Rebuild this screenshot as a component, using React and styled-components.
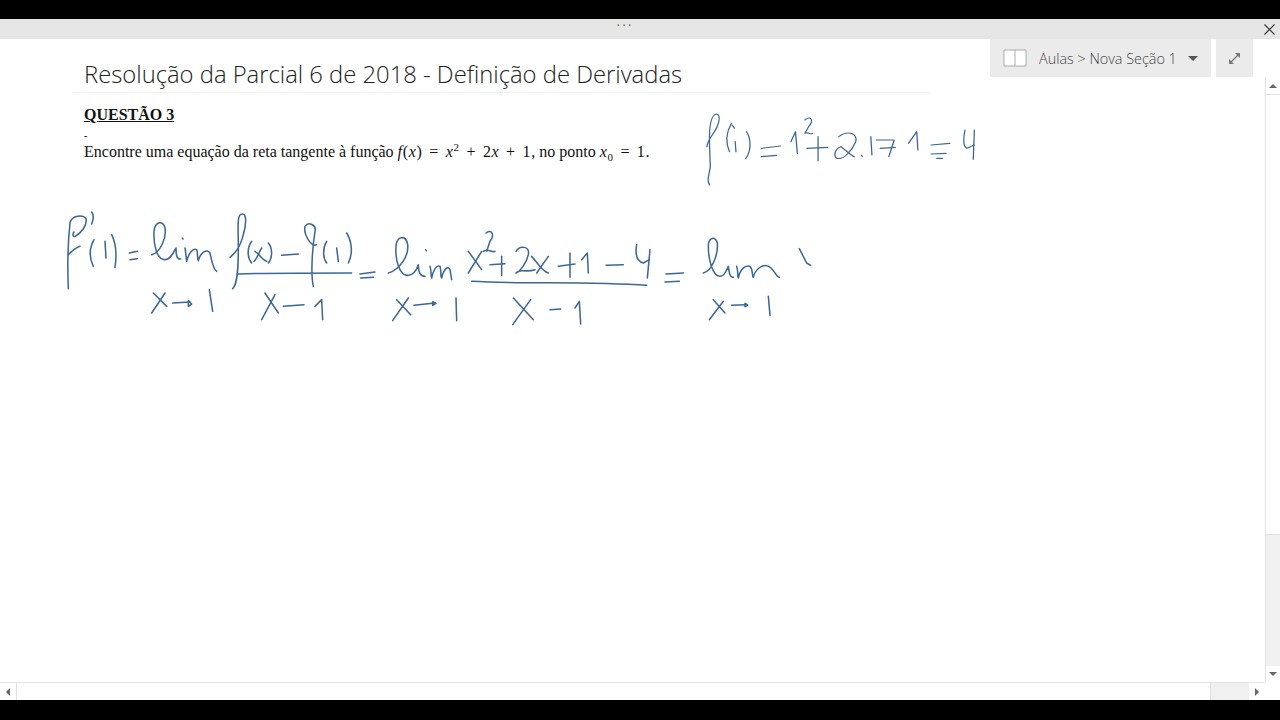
import React from 'react';
import styled, { createGlobalStyle } from 'styled-components';

const INK = '#3d6796';

const topInk = [
  'M52 555 C44 540 50 530 54 500 L52 440 C50 380 55 345 70 342 C85 345 75 380 62 400 C50 420 45 430 45 440',
  'M110 370 C95 400 95 430 105 455',
  'M120 425 L122 455',
  'M112 375 L118 385',
  'M150 395 C165 420 160 460 148 475',
  'M190 445 L240 438',
  'M190 470 L230 466',
  'M268 425 L280 395 L285 460',
  'M305 360 C320 345 330 360 315 380 L305 400 C315 395 320 405 325 400',
  'M310 445 L365 442',
  'M340 410 L340 482',
  'M395 410 C420 390 445 400 440 425 C430 450 410 480 390 475 C380 470 385 445 400 440 C415 450 425 465 436 470',
  'M456 466 L457 470',
  'M480 410 L483 465',
  'M495 420 L542 420 L528 470',
  'M505 445 L545 442',
  'M580 430 L602 395 L605 450',
  'M640 435 L690 430',
  'M640 462 L680 460',
  'M655 475 L670 475',
  'M730 390 C725 420 725 440 735 445 L755 435',
  'M755 390 L752 478',
];

const leftInk = [
  'M55 272 C52 200 55 120 60 75 C65 50 100 50 108 62 C112 80 95 105 75 115 C70 118 66 110 72 102',
  'M55 170 C65 160 75 150 90 145',
  'M125 42 C132 50 130 65 125 78',
  'M132 125 C118 150 118 180 130 205',
  'M165 130 L168 180',
  'M185 110 C200 140 200 175 195 208',
  'M238 165 L262 160',
  'M240 185 L262 182',
  'M305 170 C330 165 350 120 345 90 C340 65 315 70 312 100 C310 140 320 185 345 185 C360 185 370 165 378 150 C378 170 380 185 392 183',
  'M397 120 L399 123',
  'M405 150 C408 165 408 180 410 190 C415 165 430 150 440 155 C445 165 440 180 445 188 C450 165 470 150 480 165 C485 190 490 215 500 220',
  'M310 285 L350 325',
  'M345 285 L305 345',
  'M368 315 L420 312',
  'M415 308 L425 318 L415 325 Z',
  'M478 275 L488 340',
  'M548 272 C560 260 565 230 565 150 C565 90 560 50 575 48 C590 45 590 75 580 110 C570 150 555 165 540 178',
  'M605 130 C590 150 592 180 605 195',
  'M615 160 C625 165 635 185 650 190',
  'M635 150 C625 165 620 185 612 190',
  'M655 135 C668 150 668 180 655 195',
  'M695 172 L745 168',
  'M790 265 C780 220 790 130 795 100 C800 80 775 70 765 85 C760 110 785 150 800 140',
  'M830 130 C818 150 818 180 830 195',
  'M860 150 L865 190',
  'M890 105 C905 130 910 165 895 195',
  'M565 228 C650 225 800 225 905 225',
  'M645 285 L685 345',
  'M675 290 L635 365',
  'M700 325 L762 320',
  'M795 325 L815 305 L818 365',
  'M930 228 L975 222',
  'M932 240 L970 238',
  'M1015 225 C1050 215 1080 170 1072 135 C1065 110 1040 115 1038 145 C1035 190 1050 235 1075 232 C1090 230 1100 215 1105 200 C1105 220 1110 235 1125 235',
  'M1127 155 L1129 158',
  'M1140 205 C1145 220 1142 235 1145 240 C1150 215 1160 200 1170 205 C1175 220 1170 235 1175 240 C1180 215 1195 200 1200 215 L1205 245',
  'M1040 305 L1082 350',
  'M1075 300 L1028 368',
  'M1092 322 L1155 315',
  'M1148 311 L1158 316 L1148 322 Z',
  'M1218 300 L1220 368',
];

const rightInk = [
  'M85 160 L125 215',
  'M125 160 L85 225',
  'M138 105 C155 92 165 110 150 130 L140 160',
  'M130 160 C145 150 155 165 165 160',
  'M185 175 L185 232',
  'M150 200 L195 197',
  'M228 160 C240 140 270 145 265 170 C260 195 240 220 228 225 C240 210 255 225 285 215',
  'M275 175 C290 190 305 220 325 225',
  'M325 175 L290 225',
  'M355 205 L405 198',
  'M390 165 L390 238',
  'M425 185 L442 165 L445 225',
  'M498 202 L550 200',
  'M590 140 C585 170 590 190 610 195 L628 185',
  'M630 155 L622 240',
  'M95 250 C250 258 450 250 620 262',
  'M220 300 L280 365',
  'M272 305 L218 380',
  'M330 335 L362 333',
  'M405 330 L418 310 L422 378',
  'M678 228 L730 225',
  'M675 252 L718 250',
  'M790 225 C815 220 835 170 832 135 C828 115 805 115 805 145 C805 190 820 235 840 235 C855 235 860 215 865 205 C868 225 870 240 880 238',
  'M890 205 C895 220 892 235 895 240 C900 215 915 200 930 205 C940 215 935 235 940 238 C945 215 965 200 980 203 C1000 205 1005 235 1018 238',
  'M820 305 L855 345',
  'M850 310 L808 365',
  'M875 322 L920 320',
  'M915 316 L923 321 L915 326 Z',
  'M985 295 L990 352',
  'M1078 152 L1100 195 L1112 202',
];

function Strokes({ paths, width }) {
  return (
    <g fill="none" stroke={INK} strokeWidth={width} strokeLinecap="round" strokeLinejoin="round">
      {paths.map((d) => <path key={d} d={d} />)}
    </g>
  );
}

function App() {
  return (
    <>
      <GlobalStyle />
      <Frame>
        <BlackBar $h={19} />
        <TitleBar>
          <Dots>•••</Dots>
          <CloseBtn>
            <svg width="11" height="11" viewBox="0 0 11 11">
              <path d="M0.5 0.5 L10.5 10.5 M10.5 0.5 L0.5 10.5" stroke="#333" strokeWidth="1.2" />
            </svg>
          </CloseBtn>
        </TitleBar>
        <Body>
          <Workspace>
            <Page>
              <PageTitle>Resolução da Parcial 6 de 2018 - Definição de Derivadas</PageTitle>
              <QuestionRow>
                <Question>
                  <QuestionHead>QUESTÃO 3</QuestionHead>
                  <Dash>-</Dash>
                  <QuestionText>
                    Encontre uma equação da reta tangente à função{' '}
                    <MathText><Var>f</Var>(<Var>x</Var>) = <Var>x</Var><sup>2</sup> + 2<Var>x</Var> + 1</MathText>, no ponto{' '}
                    <MathText><Var>x</Var><sub>0</sub> = 1</MathText>.
                  </QuestionText>
                </Question>
                <TopInk viewBox="0 330 900 240" preserveAspectRatio="none">
                  <Strokes paths={topInk} width={3.4} />
                </TopInk>
              </QuestionRow>
              <MainInk viewBox="0 0 2370 405">
                <Strokes paths={leftInk} width={4.6} />
                <g transform="translate(1170 0)">
                  <Strokes paths={rightInk} width={4.6} />
                </g>
              </MainInk>
            </Page>
            <HScroll>
              <ScrollBtn>
                <Arrow $dir="left" />
              </ScrollBtn>
              <HThumb />
              <HTrack />
              <ScrollBtn>
                <Arrow $dir="right" />
              </ScrollBtn>
            </HScroll>
          </Workspace>
          <VScroll>
            <VBtn>
              <Arrow $dir="up" />
            </VBtn>
            <VThumb />
            <VTrack />
            <VBtn>
              <Arrow $dir="down" />
            </VBtn>
          </VScroll>
          <NotebookTools>
            <NotebookPicker>
              <svg width="24" height="18" viewBox="0 0 24 18">
                <path d="M1 1 H23 V17 H1 Z" fill="#fff" stroke="#9a9a9a" strokeWidth="0.8" />
                <path d="M12 1 V17" stroke="#9a9a9a" strokeWidth="0.8" />
              </svg>
              <NotebookLabel>Aulas &gt; Nova Seção 1</NotebookLabel>
              <Caret />
            </NotebookPicker>
            <ExpandBtn>
              <svg width="13" height="13" viewBox="0 0 13 13">
                <path d="M2.5 10.5 L10.5 2.5" stroke="#777" strokeWidth="1.3" />
                <path d="M7 1 H12 V6 Z M1 7 V12 H6 Z" fill="#777" />
              </svg>
            </ExpandBtn>
          </NotebookTools>
        </Body>
        <BlackBar $h={20} />
      </Frame>
    </>
  );
}

const GlobalStyle = createGlobalStyle`
  html, body {
    margin: 0;
    padding: 0;
    background: #000;
    overflow: hidden;
  }
`;

const Frame = styled.div`
  width: 1280px;
  height: 720px;
  display: flex;
  flex-direction: column;
  font-family: "Open Sans", sans-serif;
`;

const BlackBar = styled.div`
  height: ${(p) => p.$h}px;
  flex: none;
  background: #000;
`;

const TitleBar = styled.div`
  height: 20px;
  flex: none;
  background: #e6e6e6;
  display: flex;
  align-items: center;
  justify-content: flex-end;
  position: relative;
`;

const Dots = styled.span`
  position: absolute;
  left: 617px;
  top: 2px;
  font-size: 7px;
  letter-spacing: 3px;
  color: #666;
`;

const CloseBtn = styled.div`
  width: 22px;
  display: flex;
  justify-content: center;
`;

const Body = styled.div`
  flex: 1;
  min-height: 0;
  display: grid;
  grid-template-columns: 1fr 15px;
  background: #fff;
  position: relative;
`;

const Workspace = styled.div`
  display: flex;
  flex-direction: column;
  min-width: 0;
`;

const Page = styled.div`
  flex: 1;
  padding: 21px 0 0 84px;
`;

const PageTitle = styled.div`
  width: 846px;
  margin-left: -12px;
  padding: 0 0 3px 12px;
  border-bottom: 1px solid #f1f1f1;
  font-size: 23.8px;
  font-weight: 300;
  line-height: 29px;
  color: #222;
  white-space: nowrap;
`;

const QuestionRow = styled.div`
  display: flex;
  align-items: flex-start;
`;

const Question = styled.div`
  width: 606px;
  flex: none;
  padding-top: 13px;
  font-family: "Liberation Serif", serif;
  color: #111;
`;

const QuestionHead = styled.div`
  font-size: 16px;
  font-weight: 700;
  line-height: 18px;
  text-decoration: underline;
`;

const Dash = styled.div`
  font-size: 10px;
  line-height: 10px;
  margin-top: 7px;
  font-weight: 700;
`;

const QuestionText = styled.div`
  font-size: 16px;
  line-height: 20px;
  white-space: nowrap;
  margin-top: 1px;

  sup, sub {
    font-size: 11px;
    line-height: 0;
  }
`;

const MathText = styled.span`
  letter-spacing: 0.7px;
  word-spacing: 2px;
`;

const Var = styled.i`
  font-family: "Liberation Serif", serif;
`;

const TopInk = styled.svg`
  width: 339px;
  height: 80px;
  flex: none;
  margin-top: 17px;
`;

const MainInk = styled.svg`
  display: block;
  width: 790px;
  height: 135px;
  margin: 8px 0 0 -34px;
`;

const HScroll = styled.div`
  height: 17px;
  flex: none;
  display: flex;
  background: #fff;
  border-top: 1px solid #e2e2e2;
`;

const ScrollBtn = styled.div`
  width: 16px;
  flex: none;
  display: flex;
  align-items: center;
  justify-content: center;
`;

const HThumb = styled.div`
  width: 1195px;
  flex: none;
  background: #fff;
  border-left: 1px solid #e2e2e2;
  border-right: 1px solid #e2e2e2;
  box-sizing: border-box;
`;

const HTrack = styled.div`
  flex: 1;
  background: #f0f0f0;
`;

const VScroll = styled.div`
  margin: 39px 0 18px;
  display: flex;
  flex-direction: column;
  border-left: 1px solid #e2e2e2;
`;

const VBtn = styled.div`
  height: 16px;
  flex: none;
  display: flex;
  align-items: center;
  justify-content: center;
`;

const VThumb = styled.div`
  height: 441px;
  flex: none;
  box-sizing: border-box;
  border-top: 1px solid #e2e2e2;
  border-bottom: 1px solid #e2e2e2;
`;

const VTrack = styled.div`
  flex: 1;
  background: #f0f0f0;
`;

const arrowShapes = {
  up: 'border-left: 4px solid transparent; border-right: 4px solid transparent; border-bottom: 4px solid #666;',
  down: 'border-left: 4px solid transparent; border-right: 4px solid transparent; border-top: 4px solid #666;',
  left: 'border-top: 4px solid transparent; border-bottom: 4px solid transparent; border-right: 4px solid #666;',
  right: 'border-top: 4px solid transparent; border-bottom: 4px solid transparent; border-left: 4px solid #666;',
};

const Arrow = styled.span`
  width: 0;
  height: 0;
  ${(p) => arrowShapes[p.$dir]}
`;

const NotebookTools = styled.div`
  position: absolute;
  top: 0;
  left: 990px;
  display: flex;
  gap: 5px;
`;

const NotebookPicker = styled.div`
  width: 221px;
  height: 38px;
  box-sizing: border-box;
  padding-left: 13px;
  background: #ebebeb;
  display: flex;
  align-items: center;
`;

const NotebookLabel = styled.span`
  margin-left: 12px;
  font-size: 14.4px;
  font-weight: 300;
  color: #444;
  white-space: nowrap;
`;

const Caret = styled.span`
  margin-left: 11px;
  width: 0;
  height: 0;
  border-left: 5px solid transparent;
  border-right: 5px solid transparent;
  border-top: 5px solid #555;
`;

const ExpandBtn = styled.div`
  width: 37px;
  height: 38px;
  background: #ebebeb;
  display: flex;
  align-items: center;
  justify-content: center;
`;

export default App;
